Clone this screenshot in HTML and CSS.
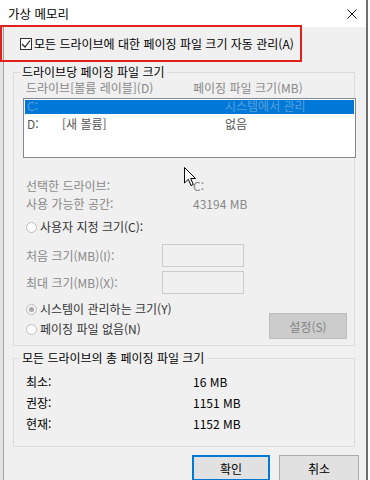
FILE: index.html
```html
<!DOCTYPE html>
<html lang="ko">
<head>
    <meta charset="UTF-8">
    <meta name="viewport" content="width=device-width, initial-scale=1.0">
    <title>가상 메모리</title>
    <link rel="stylesheet" href="styles.css">
</head>
<body>

    <div class="window">
        <div class="titlebar">
            <span class="title">가상 메모리</span>
            <svg class="close" width="10" height="10" viewBox="0 0 10 10">
                <path d="M0.5 0.5 L9.5 9.5 M9.5 0.5 L0.5 9.5" stroke="#111" stroke-width="1" fill="none"/>
            </svg>
        </div>

        <div class="content">
            <!-- auto manage checkbox -->
            <div class="auto-row">
                <span class="checkbox">
                    <svg width="10" height="10" viewBox="0 0 10 10">
                        <path d="M1 5 L4 8 L9 1.5" stroke="#222" stroke-width="1.2" fill="none"/>
                    </svg>
                </span>
                모든 드라이브에 대한 페이징 파일 크기 자동 관리(A)
            </div>

            <fieldset class="group per-drive">
                <legend>드라이브당 페이징 파일 크기</legend>
                <div class="cols">
                    <span>드라이브[볼륨 레이블](D)</span>
                    <span>페이징 파일 크기(MB)</span>
                </div>
                <div class="listbox">
                    <div class="row sel"><span>C:</span><span></span><span>시스템에서 관리</span></div>
                    <div class="row"><span>D:</span><span>[새 볼륨]</span><span>없음</span></div>
                </div>

                <div class="info">
                    <span>선택한 드라이브:</span><span>C:</span>
                    <span>사용 가능한 공간:</span><span>43194 MB</span>
                </div>

                <div class="radio-row custom"><span class="radio"></span>사용자 지정 크기(C):</div>

                <div class="size-row first"><span>처음 크기(MB)(I):</span><span class="textbox"></span></div>
                <div class="size-row"><span>최대 크기(MB)(X):</span><span class="textbox"></span></div>

                <div class="bottom">
                    <div class="radios">
                        <div class="radio-row"><span class="radio on"></span>시스템이 관리하는 크기(Y)</div>
                        <div class="radio-row"><span class="radio"></span>페이징 파일 없음(N)</div>
                    </div>
                    <button class="set-btn" disabled>설정(S)</button>
                </div>
            </fieldset>

            <fieldset class="group totals">
                <legend>모든 드라이브의 총 페이징 파일 크기</legend>
                <div class="total-rows">
                    <span>최소:</span><span>16 MB</span>
                    <span>권장:</span><span>1151 MB</span>
                    <span>현재:</span><span>1152 MB</span>
                </div>
            </fieldset>

            <div class="buttons">
                <button class="btn default">확인</button>
                <button class="btn cancel">취소</button>
            </div>
        </div>

        <!-- red highlight box + mouse pointer over the dialog -->
        <div class="highlight"></div>
        <svg class="cursor" width="13" height="20" viewBox="0 0 13 20">
            <path d="M0.5 0.5 L0.5 16 L4.3 12.3 L7 18.5 L9.3 17.5 L6.7 11.5 L11.5 11.5 Z" fill="#fff" stroke="#000" stroke-width="1"/>
        </svg>
    </div>

</body>
</html>
```

FILE: styles.css
```css
body {
    margin: 0;
    background-color: #fff;
}

.window {
    position: relative;
    width: 366px;
    height: 480px;
    overflow: hidden;
    border-right: 2px solid #6e6e6e;
    font-family: "Noto Sans CJK KR", sans-serif;
    font-size: 12px;
    color: #000;
}

.titlebar {
    display: flex;
    align-items: center;
    height: 27px;
    padding-left: 8px;
    background-color: #fff;
}

    .titlebar .title {
        font-size: 12.5px;
    }

    .titlebar .close {
        margin-left: auto;
        margin-right: 9px;
    }

.content {
    height: 453px;
    padding-top: 9px;
    box-sizing: border-box;
    background: linear-gradient(to right, #e4e4e4 0 3px, #a3a3a3 3px 4px, #f0f0f0 4px);
}

.auto-row {
    display: flex;
    align-items: center;
    height: 16px;
    line-height: 16px;
    padding-left: 20px;
}

.checkbox {
    display: flex;
    align-items: center;
    justify-content: center;
    width: 12px;
    height: 12px;
    box-sizing: border-box;
    border: 1px solid #333;
    background-color: #fff;
    margin-right: 2px;
}

.group {
    margin: 0 11px 0 13px;
    padding: 0;
    min-width: 0;
    border: 1px solid #dcdcdc;
}

    .group legend {
        margin-left: 6px;
        padding: 0 2px;
        line-height: 16px;
    }

.per-drive {
    margin-top: 12px;
    padding-bottom: 6px;
}

.cols {
    display: grid;
    grid-template-columns: 167px auto;
    padding-left: 12px;
    line-height: 16px;
    color: #888;
}

.listbox {
    margin: 2px -2px 0 9px;
    height: 60px;
    box-sizing: border-box;
    padding: 1px;
    border: 1px solid #828790;
    background-color: #fff;
}

    .listbox .row {
        display: grid;
        grid-template-columns: 35px 163px auto;
        height: 17px;
        padding-top: 2px;
        box-sizing: border-box;
        line-height: 15px;
        padding-left: 2px;
        color: #555;
    }

        .listbox .row.sel {
            height: 14px;
            padding-top: 0;
            line-height: 12px;
            background-color: #0078d7;
            color: #5b9fdc;
        }

.info {
    display: grid;
    grid-template-columns: 167px auto;
    margin-top: 19px;
    padding-left: 12px;
    line-height: 18px;
    color: #888;
}

.radio-row {
    display: flex;
    align-items: center;
    padding-left: 12px;
    color: #333;
}

    .radio-row.custom {
        margin-top: 5px;
        line-height: 18px;
    }

.radio {
    width: 11px;
    height: 11px;
    box-sizing: border-box;
    border: 1px solid #bdbdbd;
    border-radius: 50%;
    background-color: #fff;
    margin-right: 3px;
    position: relative;
}

    .radio.on {
        background-color: #f4f4f4;
    }

        .radio.on::after {
            content: "";
            position: absolute;
            left: 2px;
            top: 2px;
            width: 5px;
            height: 5px;
            border-radius: 50%;
            background-color: #a8a8a8;
        }

.size-row {
    display: grid;
    grid-template-columns: 136px 82px;
    align-items: center;
    height: 23px;
    margin-top: 4px;
    padding-left: 12px;
    color: #888;
}

    .size-row.first {
        margin-top: 8px;
    }

.textbox {
    height: 23px;
    box-sizing: border-box;
    border: 1px solid #cccccc;
    background-color: #f0f0f0;
}

.bottom {
    display: flex;
    margin-top: 5px;
}

    .bottom .radio-row {
        line-height: 20px;
    }

.set-btn {
    margin: 14px 7px 0 auto;
    width: 78px;
    height: 26px;
    border: 1px solid #bfbfbf;
    background-color: #cccccc;
    color: #838383;
    font-family: inherit;
    font-size: inherit;
    padding: 0;
}

.totals {
    margin-top: 4px;
    padding-bottom: 12px;
}

.total-rows {
    display: grid;
    grid-template-columns: 167px auto;
    padding: 5px 0 0 12px;
    line-height: 21px;
}

.buttons {
    display: flex;
    justify-content: flex-end;
    gap: 9px;
    margin-top: 8px;
    padding-right: 7px;
}

.btn {
    height: 26px;
    padding: 0;
    background-color: #e1e1e1;
    font-family: inherit;
    font-size: inherit;
    color: #000;
}

    .btn.default {
        width: 78px;
        border: 2px solid #0078d7;
    }

    .btn.cancel {
        width: 80px;
        border: 1px solid #adadad;
    }

/* red annotation box round the checkbox */
.highlight {
    position: absolute;
    left: 0;
    top: 25px;
    width: 302px;
    height: 37px;
    box-sizing: border-box;
    border: 2px solid #e3211c;
}

.cursor {
    position: absolute;
    left: 184px;
    top: 167px;
}
```
